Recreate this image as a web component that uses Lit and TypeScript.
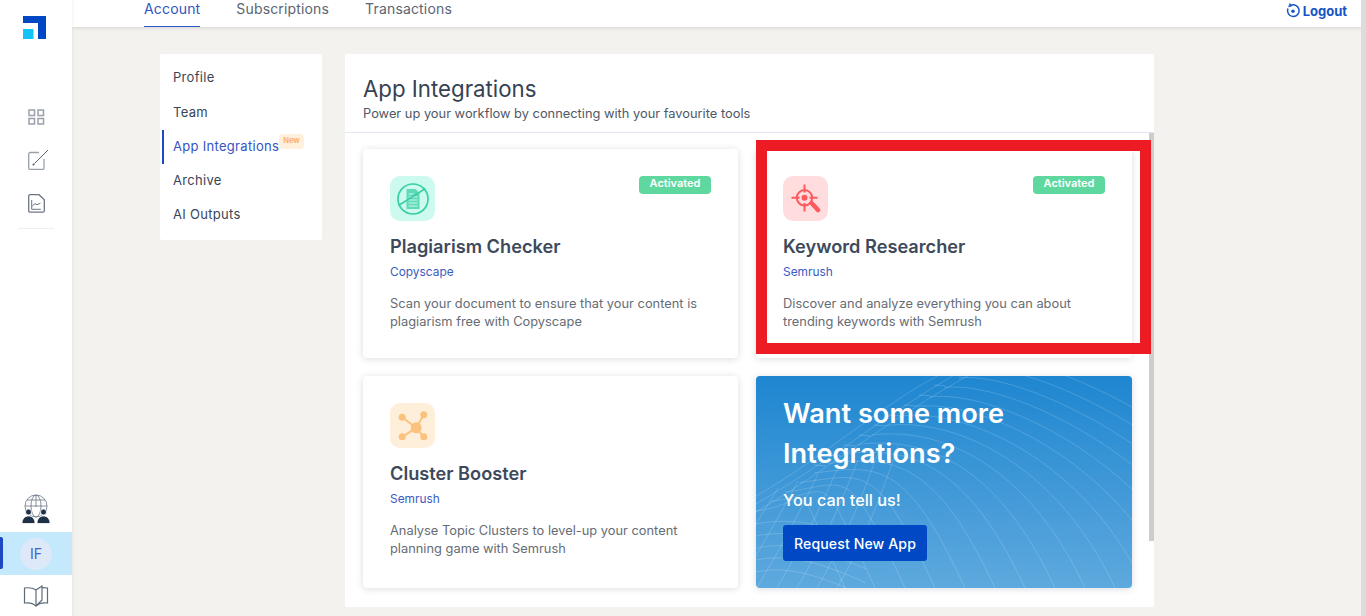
import { LitElement, html, css, svg } from "lit";
import { customElement } from "lit/decorators.js";

const waves = () => {
  const out = [];
  for (let i = 0; i < 17; i++) {
    const ex = i * 14.5;
    const ey = 135 - i * 9.5;
    const endX = 90 + i * 30;
    const endY = 214;
    out.push(svg`<path d="M${ex} ${ey} C ${ex + 65} ${ey - 8}, ${endX - 60} ${endY - 130}, ${endX} ${endY}" />`);
  }
  out.push(svg`<path d="M0 136 C 70 95, 130 45, 215 -2" />`);
  out.push(svg`<path d="M0 128 C 70 88, 130 38, 200 -2" />`);
  out.push(svg`<path d="M0 120 C 70 80, 120 32, 185 -2" />`);
  for (let j = 0; j < 7; j++) {
    const sx = -40 + j * 20;
    out.push(svg`<path d="M${sx} 214 C ${sx + 10} 195, ${sx + 30} 165, ${sx + 62} ${112 - j * 7}" />`);
  }
  for (let t = 0; t < 10; t++) {
    const bx = 70 + t * 15;
    const by = 90 - t * 10;
    out.push(svg`<path d="M${bx} ${by} l -12 -1" />`);
  }
  for (let k = 0; k < 5; k++) {
    out.push(svg`<path d="M0 ${148 + k * 12} C 30 ${142 + k * 12}, 60 ${145 + k * 13}, 110 ${165 + k * 14}" />`);
  }
  return out;
};

@customElement("app-root")
export class AppRoot extends LitElement {
  static styles = css`
    :host { display: block; width: 1366px; height: 616px; overflow: hidden; font-family: Inter, "Noto Sans", sans-serif; color: #3a4558; }
    * { box-sizing: border-box; }
    .page { display: flex; width: 1366px; height: 616px; background: #f3f2ee; position: relative; overflow: hidden; }
    .rail { width: 72px; flex: none; background: #fff; display: flex; flex-direction: column; align-items: center; position: relative; z-index: 3; box-shadow: 1px 0 3px rgba(0,0,0,.05); padding-top: 16px; }
    .logo { width: 23px; height: 23px; display: block; margin-left: -3px; }
    .rail-nav { margin-top: 70px; width: 36px; display: flex; flex-direction: column; align-items: center; gap: 24px; padding-bottom: 15px; border-bottom: 1px solid #eceef0; }
    .rail-nav svg { display: block; }
    .rail-nav .pen { margin-top: 1px; margin-left: 4px; }
    .rail-bottom { margin-top: auto; width: 100%; display: flex; flex-direction: column; align-items: center; }
    .user { width: 72px; height: 43px; background: #c4e9fc; display: flex; align-items: center; justify-content: center; position: relative; margin-top: 8px; }
    .user::before { content: ""; position: absolute; left: 0; top: 5px; width: 3px; height: 32px; background: #1c49c2; border-radius: 0 2px 2px 0; }
    .avatar { width: 32px; height: 32px; border-radius: 50%; background: #dde9f8; color: #4264c8; font-size: 14px; display: flex; align-items: center; justify-content: center; }
    .guide { margin-top: 10px; margin-bottom: 9px; display: block; }
    .main { flex: 1; min-width: 0; display: flex; flex-direction: column; }
    .top { height: 27px; flex: none; background: #fff; box-shadow: 0 1px 4px rgba(0,0,0,.12); display: flex; justify-content: space-between; align-items: flex-start; padding: 0 19px 0 72px; position: relative; z-index: 2; }
    .tabs { display: flex; gap: 36px; font-size: 14px; color: #5b6472; letter-spacing: .16px; height: 27px; }
    .tab { line-height: 18px; height: 27px; }
    .tab.on { color: #2f55c4; border-bottom: 1px solid #2f55c4; }
    .logout { display: flex; align-items: center; gap: 2px; font-size: 13px; font-weight: 700; color: #1553c7; height: 21px; }
    .content { flex: 1; display: flex; align-items: flex-start; padding: 27px 0 0 88px; gap: 23px; }
    .menu { width: 162px; height: 186px; background: #fff; border-radius: 2px; padding: 6px 0 0 2px; font-size: 13px; letter-spacing: .3px; display: flex; flex-direction: column; }
    .item { height: 34px; flex: none; display: flex; align-items: center; padding-left: 11px; color: #3a4558; position: relative; margin-bottom: 1px; }
    .item.plain { margin-bottom: 0; }
    .item.on { color: #3454c4; border-left: 2px solid #1c49c2; padding: 0 0 2px 9px; margin-bottom: -1px; }
    .new { position: absolute; left: 115px; top: 4px; height: 15px; width: 25px; background: #fff0de; color: #fbb26a; font-size: 7.5px; font-weight: 700; border-radius: 4px; text-align: center; line-height: 13px; letter-spacing: 0; }
    .panel { width: 809px; height: 553px; background: #fff; border-radius: 2px; position: relative; display: flex; flex-direction: column; }
    .head { height: 79px; flex: none; padding: 20px 18px 0; border-bottom: 1px solid #e3e5f0; }
    h1 { margin: 0; font-size: 22.25px; font-weight: 400; line-height: 29px; color: #364153; }
    .head p { margin: 3px 0 0; font-size: 12.85px; line-height: 16px; color: #4f5866; }
    .grid { display: grid; grid-template-columns: 375px 376px; grid-auto-rows: min-content; column-gap: 18px; row-gap: 18px; padding: 16px 0 0 18px; }
    .card { height: 209px; background: #fff; border-radius: 4px; box-shadow: 0 1px 7px rgba(30,40,60,.16); padding: 27px 27px 0; position: relative; }
    .card.b { height: 212px; }
    .ico { width: 45px; height: 45px; border-radius: 10px; display: flex; align-items: center; justify-content: center; }
    .mint { background: #ccfaef; }
    .rose { background: #ffdcdd; }
    .sand { background: #feefdb; }
    .badge { position: absolute; top: 27px; right: 27px; width: 72px; height: 18px; background: #5fd8a0; color: #fff; font-size: 11px; font-weight: 600; border-radius: 4px; text-align: center; line-height: 14px; }
    h2 { margin: 14px 0 0; font-size: 18.2px; font-weight: 600; line-height: 22px; color: #3e4a5c; }
    .by { margin-top: 7px; font-size: 11.9px; line-height: 16px; color: #3b5bc0; }
    .desc { margin-top: 15px; font-size: 12.85px; line-height: 18px; color: #666c75; }
    .promo { height: 212px; border-radius: 4px; background: linear-gradient(180deg,#1e86d0,#5ea9de); box-shadow: 0 1px 7px rgba(30,40,60,.16); position: relative; overflow: hidden; color: #fff; padding: 18px 27px 0; }
    .promo svg { position: absolute; inset: 0; }
    .promo > div, .promo > a { position: relative; }
    .promo .t { font-size: 27.2px; font-weight: 600; line-height: 40px; }
    .promo .s { font-size: 16.3px; font-weight: 500; line-height: 20px; margin-top: 16px; }
    .btn { display: flex; align-items: center; justify-content: center; width: 144px; height: 36px; margin-top: 15px; background: #0048c4; border-radius: 3px; font-size: 14.1px; font-weight: 500; color: #fff; letter-spacing: .1px; }
    .bar { position: absolute; right: 0; top: 79px; width: 5px; height: 408px; background: #cdcdcd; }
    .mark { position: absolute; left: 756px; top: 140px; width: 395px; height: 214px; border: 11px solid #ed1c24; z-index: 4; }
    .edge { position: absolute; right: 0; top: 0; width: 5px; height: 616px; background: #dcdcdc; z-index: 5; }
  `;

  render() {
    return html`<div class="page">
      <aside class="rail">
        <svg class="logo" viewBox="0 0 23 23"><path fill="#0047c6" d="M0 0h23v23h-8V7H0z"/><path fill="#12c4fb" d="M0 13h10.500v10H0z"/></svg>
        <nav class="rail-nav">
          <svg width="17" height="16" viewBox="0 0 17 16" fill="none" stroke="#9aa0ab" stroke-width="1.500"><rect x="1" y="1" width="5.500" height="5.500"/><rect x="10" y="1" width="5.500" height="5.500"/><rect x="1" y="9.500" width="5.500" height="5.500"/><rect x="10" y="9.500" width="5.500" height="5.500"/></svg>
          <svg class="pen" width="20" height="20" viewBox="0 0 20 20" fill="none" stroke="#9aa0ab" stroke-width="1.300"><path d="M11 2.500H2.200A1.500 1.500 0 0 0 .7 4v14a1.500 1.500 0 0 0 1.500 1.500h12.300a1.500 1.500 0 0 0 1.500-1.500V9"/><path d="M6.500 13.500 20 0" stroke="#5b6576" stroke-width="1"/><circle cx="5.500" cy="14.500" r="1" fill="#4a5566" stroke="none"/></svg>
          <svg width="17" height="19" viewBox="0 0 17 19" fill="none" stroke="#6d7686" stroke-width="1.300"><path d="M2 .7h9l5.300 5v11a1.500 1.500 0 0 1-1.500 1.500H2A1.500 1.500 0 0 1 .7 16.700V2A1.500 1.500 0 0 1 2 .7z"/><path d="M3.700 6v9.300h9M4.200 12l2.800-2.300 2 1 3.500-1.500" stroke-width="1"/></svg>
        </nav>
        <div class="rail-bottom">
          <svg width="30" height="30" viewBox="0 0 30 30"><g fill="none" stroke="#6b7686" stroke-width=".8"><circle cx="15" cy="12" r="11"/><ellipse cx="15" cy="12" rx="5" ry="11"/><path d="M4 12h22M6 6h18M15 1v12"/></g><g fill="#1f3146" stroke="#fff" stroke-width=".8"><circle cx="7.500" cy="18" r="3"/><path d="M1 29.500c0-5 3-7.500 6.500-7.500s6.500 2.500 6.500 7.500z"/><circle cx="22.500" cy="18" r="3"/><path d="M16 29.500c0-5 3-7.500 6.500-7.500s6.500 2.500 6.500 7.500z"/></g></svg>
          <div class="user"><div class="avatar">IF</div></div>
          <svg class="guide" width="26" height="22" viewBox="0 0 26 22" fill="none" stroke="#5f6b7b" stroke-width="1.200"><path d="M13 5C10 3 5 2.500 1.500 3v15c3.500-.5 8.500 0 11.500 3 3-3 8-3.500 11.500-3V3C21 2.500 19 2.800 19 2.800"/><path d="M13 5v16M13 5l6-4v14l-6 6"/></svg>
        </div>
      </aside>
      <div class="main">
        <header class="top">
          <div class="tabs"><div class="tab on">Account</div><div class="tab">Subscriptions</div><div class="tab">Transactions</div></div>
          <div class="logout"><svg width="15" height="15" viewBox="0 0 15 15" fill="none" stroke="#1553c7" stroke-width="1.500"><path d="M4.500 2.600a5.800 5.800 0 1 1-2.600 3"/><path d="M3.500 .5l1.300 2.300-2.400.7"/><circle cx="7" cy="8.300" r="1.700" fill="#1553c7" stroke="none"/></svg>Logout</div>
        </header>
        <div class="content">
          <div class="menu">
            <div class="item">Profile</div><div class="item">Team</div>
            <div class="item on">App Integrations<span class="new">New</span></div>
            <div class="item plain">Archive</div><div class="item plain">AI Outputs</div>
          </div>
          <section class="panel">
            <div class="head"><h1>App Integrations</h1><p>Power up your workflow by connecting with your favourite tools</p></div>
            <div class="grid">
              <article class="card">
                <div class="ico mint"><svg width="34" height="34" viewBox="0 0 34 34" fill="none" stroke="#38cfa5" stroke-width="1.700"><circle cx="17" cy="17" r="15"/><path fill="#5fd9b8" stroke="none" d="M10.500 7h9l4 4v16h-13z"/><path d="M12.500 12h5M12.500 15h9M12.500 18h9M12.500 21h9M12.500 24h9" stroke="#ccfaef" stroke-width="1"/><path d="M2.500 23.500 29.500 6.500" stroke-width="1.500"/></svg></div>
                <span class="badge">Activated</span>
                <h2>Plagiarism Checker</h2><div class="by">Copyscape</div>
                <div class="desc">Scan your document to ensure that your content is<br>plagiarism free with Copyscape</div>
              </article>
              <article class="card">
                <div class="ico rose"><svg width="30" height="32" viewBox="0 0 30 32" fill="none" stroke="#fb5a5e" stroke-width="2"><circle cx="13.500" cy="14.800" r="7.700"/><circle cx="13.500" cy="14.800" r="3" fill="#fb5a5e" stroke="none"/><path d="M13.500 1.500v8M13.500 20v8.500M.5 14.800h8M18.500 14.800h8"/><path d="M21 20.500l6 6.500" stroke-width="4.500" stroke-linecap="round"/></svg></div>
                <span class="badge">Activated</span>
                <h2>Keyword Researcher</h2><div class="by">Semrush</div>
                <div class="desc">Discover and analyze everything you can about<br>trending keywords with Semrush</div>
              </article>
              <article class="card b">
                <div class="ico sand"><svg width="30" height="30" viewBox="0 0 30 30" fill="#fbc27e" stroke="#fbc27e" stroke-width="2"><path d="M4.200 6.200 18.200 16.800M25.800 3.800 18.200 16.800M4.200 25.800 18.200 16.800M25.800 25.800 18.200 16.800"/><circle cx="18.200" cy="16.800" r="5.500" stroke="none"/><circle cx="4.200" cy="6.200" r="3.500" stroke="none"/><circle cx="25.800" cy="3.800" r="3.500" stroke="none"/><circle cx="4.200" cy="25.800" r="3.500" stroke="none"/><circle cx="25.800" cy="25.800" r="3.500" stroke="none"/></svg></div>
                <h2>Cluster Booster</h2><div class="by">Semrush</div>
                <div class="desc">Analyse Topic Clusters to level-up your content<br>planning game with Semrush</div>
              </article>
              <article class="promo">
                <svg width="376" height="212" viewBox="0 0 376 212" fill="none" stroke="rgba(255,255,255,.17)" stroke-width="1">${waves()}</svg>
                <div class="t">Want some more<br>Integrations?</div>
                <div class="s">You can tell us!</div>
                <a class="btn">Request New App</a>
              </article>
            </div>
            <div class="bar"></div>
          </section>
        </div>
      </div>
      <div class="mark"></div>
      <div class="edge"></div>
    </div>`;
  }
}
